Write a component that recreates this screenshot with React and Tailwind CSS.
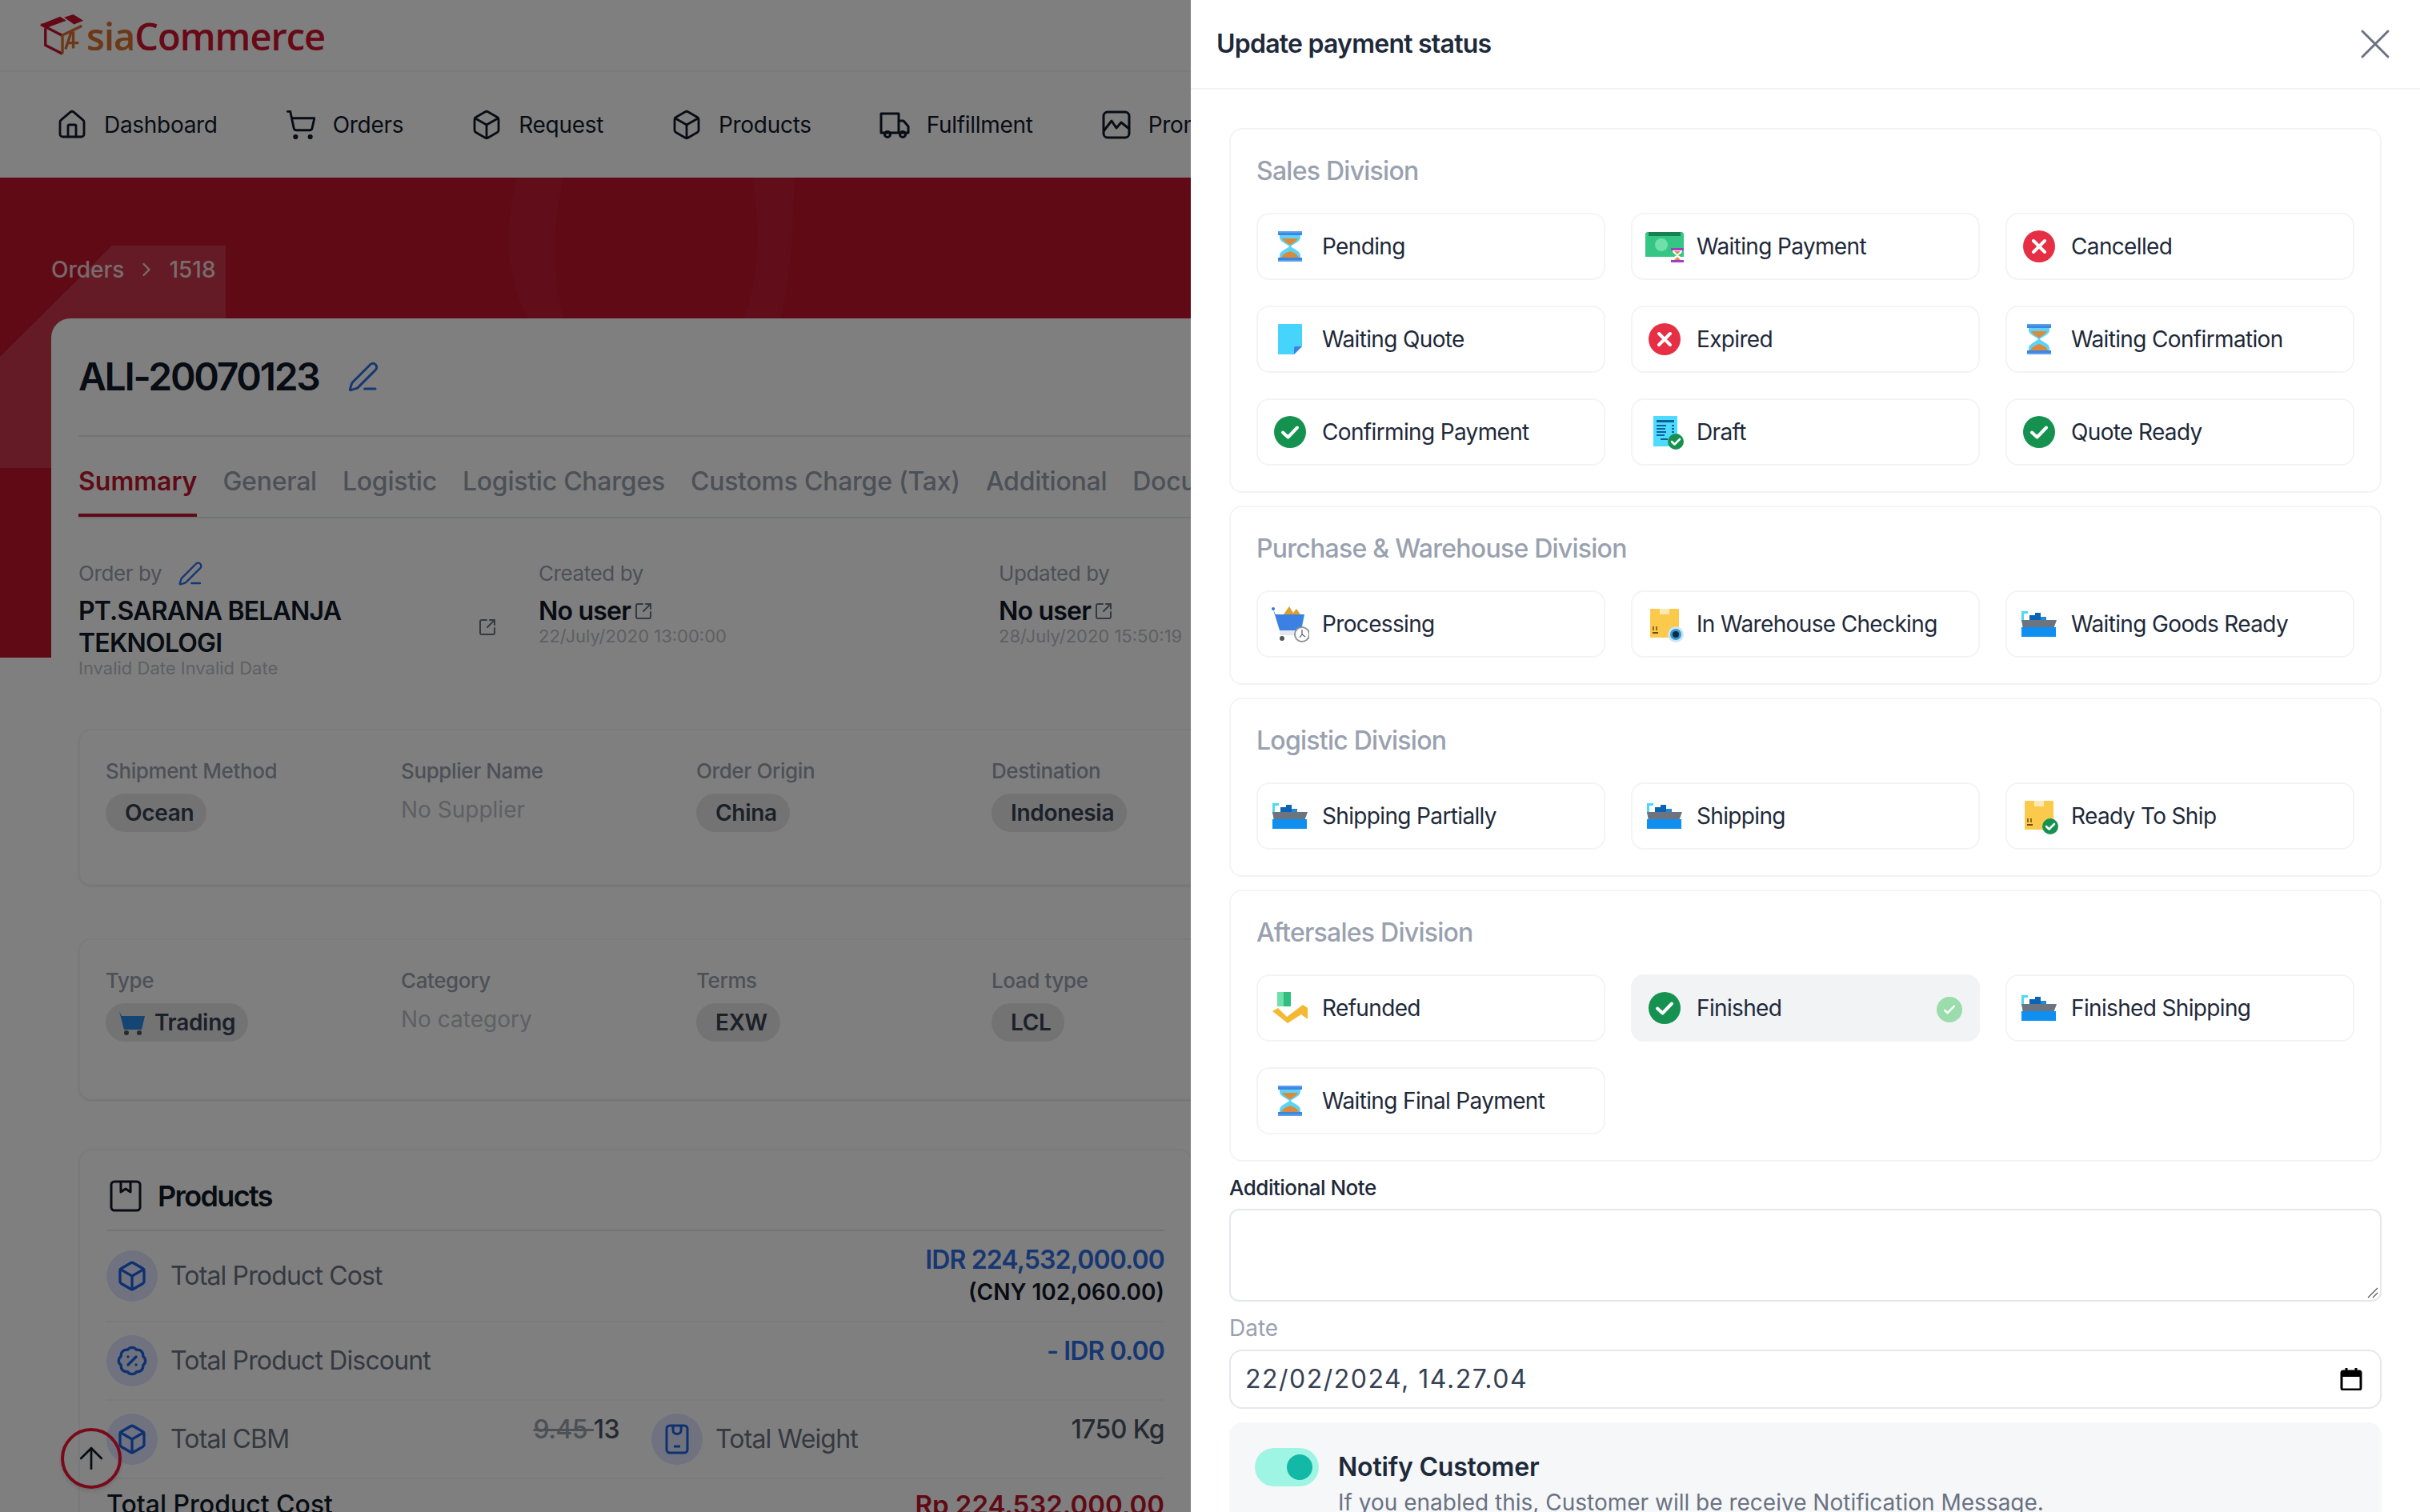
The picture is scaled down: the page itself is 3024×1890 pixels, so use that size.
import React from 'react';
import { House, ShoppingCart, Box, X, PenLine, SquareArrowOutUpRight, ChevronRight, BadgePercent, ArrowUp } from 'lucide-react';

// status icons, drawn on a 48x48 box so they all line up in the buttons
const Hourglass = ({ bar = '#3d87e2', glass = '#5dd3fb', sand = '#d98b3a' }) => (
  <g>
    <rect x="9" y="5" width="30" height="2" fill="#5aa0ee" />
    <rect x="9" y="7" width="30" height="3" fill={bar} />
    <path d="M11 10H37V13C37 18 28 21 25 24C28 27 37 30 37 35V38H11V35C11 30 20 27 23 24C20 21 11 18 11 13Z" fill={glass} />
    <path d="M14 14H34C32 18 27 20 24 22.500C21 20 16 18 14 14Z" fill={sand} />
    <path d="M24 30C27 31 33 33 35 38H13C15 33 21 31 24 30Z" fill={sand} />
    <rect x="9" y="38" width="30" height="3" fill={bar} />
    <rect x="9" y="41" width="30" height="2" fill="#5aa0ee" />
  </g>
);

const Badge = ({ cx = 39, cy = 38, r = 10 }) => (
  <g>
    <circle cx={cx} cy={cy} r={r} fill="#16924f" />
    <path d={`M${cx - 5} ${cy}l3.500 3.500l6.500 -6.500`} fill="none" stroke="#fff" strokeWidth="2.500" strokeLinecap="round" strokeLinejoin="round" />
  </g>
);

const ShipArt = () => (
  <g>
    <rect x="2" y="9" width="3" height="13" fill="#4fd8f2" />
    <rect x="2" y="8" width="8" height="3" fill="#4fd8f2" />
    <rect x="12" y="13" width="7" height="6" fill="#0b63b5" />
    <rect x="19" y="10" width="7" height="9" fill="#0b63b5" />
    <rect x="26" y="15" width="7" height="4" fill="#2188d8" />
    <path d="M2 19H46L42 30H4Z" fill="#6c7480" />
    <path d="M2 28H45V40H2Z" fill="#0f8ff0" />
  </g>
);

const BoxArt = () => (
  <g>
    <rect x="6" y="5" width="36" height="36" rx="1" fill="#fbca4c" />
    <rect x="18" y="5" width="12" height="7" fill="#fdeab2" />
    <path d="M10 32v-5M14 32v-5" stroke="#6b4a10" strokeWidth="1.500" />
    <rect x="9" y="34" width="7" height="2" fill="#6b4a10" />
  </g>
);

const icons = {
  hourglass: <Hourglass />,
  cross: (
    <g>
      <circle cx="24" cy="24" r="20" fill="#e62f45" />
      <path d="M17 17L31 31M31 17L17 31" stroke="#fff" strokeWidth="4" strokeLinecap="round" />
    </g>
  ),
  check: (
    <g>
      <circle cx="24" cy="24" r="20" fill="#15924f" />
      <path d="M15 24.500L21.500 30.500L33 18.500" fill="none" stroke="#fff" strokeWidth="4" strokeLinecap="round" strokeLinejoin="round" />
    </g>
  ),
  cash: (
    <g>
      <path d="M0 8L2 6H46L48 8V37H0Z" fill="#35c584" />
      <rect x="4" y="6" width="40" height="5" fill="#17824f" />
      <circle cx="20" cy="22" r="8" fill="#6fe0a9" />
      <rect x="32" y="26" width="16" height="3" fill="#a13dc9" />
      <path d="M34 29H46C46 33 42 34 41 35C42 36 46 37 46 41H34C34 37 38 36 39 35C38 34 34 33 34 29Z" fill="#fff" />
      <path d="M36 30H44L40 34Z" fill="#e0913a" />
      <path d="M40 37L44 41H36Z" fill="#e0913a" />
      <rect x="32" y="41" width="16" height="3" fill="#a13dc9" />
    </g>
  ),
  doc: (
    <g>
      <path d="M10 5H38Q39 5 39 6V33L29 43H10Q9 43 9 42V6Q9 5 10 5Z" fill="#46d4fd" />
      <path d="M39 33L29 43V35Q29 33 31 33Z" fill="#3c80e0" />
    </g>
  ),
  draft: (
    <g>
      <rect x="10" y="4" width="30" height="38" fill="#4ddcff" />
      <rect x="14" y="9" width="22" height="3" fill="#0e5f9e" />
      <path d="M14 16H26M14 20H25M14 24H26M14 28H24M19 33H28" stroke="#0e5f9e" strokeWidth="2" />
      <path d="M33 16H36M33 20H36M33 24H36" stroke="#0e5f9e" strokeWidth="2" />
      <Badge cx="38" cy="36" r="10" />
    </g>
  ),
  cart: (
    <g>
      <path d="M16 12L23 2L28 10L32 5L37 12Z" fill="#dca02c" />
      <circle cx="3" cy="5" r="2" fill="#2f78d8" />
      <path d="M3 6L6 12H42L38 32H11Z" fill="#3b80e2" />
      <rect x="11" y="32" width="24" height="6" fill="#e5e9ef" />
      <circle cx="14" cy="42" r="3" fill="#555" />
      <circle cx="39" cy="37" r="10" fill="#8d939b" />
      <circle cx="39" cy="37" r="8" fill="#fff" />
      <path d="M39 31V37L43 40M39 37L36 41" stroke="#555" strokeWidth="1.200" fill="none" />
    </g>
  ),
  watch: (
    <g>
      <BoxArt />
      <circle cx="38" cy="37" r="10" fill="#cfe4f2" />
      <circle cx="38" cy="37" r="7" fill="#2f9ad6" />
      <circle cx="38" cy="37" r="4" fill="#12293f" />
    </g>
  ),
  boxok: (
    <g>
      <BoxArt />
      <Badge cx="38" cy="37" r="10" />
    </g>
  ),
  ship: <ShipArt />,
  refund: (
    <g>
      <rect x="8" y="4" width="17" height="18" fill="#2fbe7e" />
      <rect x="8" y="4" width="8" height="18" fill="#6fe0a9" />
      <path d="M2 28L9 24L20 35L40 20L46 24V38L38 32L21 43Z" fill="#f4b832" />
    </g>
  ),
};

const divisions = [
  {
    name: 'Sales Division',
    items: [
      ['Pending', 'hourglass'],
      ['Waiting Payment', 'cash'],
      ['Cancelled', 'cross'],
      ['Waiting Quote', 'doc'],
      ['Expired', 'cross'],
      ['Waiting Confirmation', 'hourglass'],
      ['Confirming Payment', 'check'],
      ['Draft', 'draft'],
      ['Quote Ready', 'check'],
    ],
  },
  {
    name: 'Purchase & Warehouse Division',
    items: [
      ['Processing', 'cart'],
      ['In Warehouse Checking', 'watch'],
      ['Waiting Goods Ready', 'ship'],
    ],
  },
  {
    name: 'Logistic Division',
    items: [
      ['Shipping Partially', 'ship'],
      ['Shipping', 'ship'],
      ['Ready To Ship', 'boxok'],
    ],
  },
  {
    name: 'Aftersales Division',
    items: [
      ['Refunded', 'refund'],
      ['Finished', 'check', true],
      ['Finished Shipping', 'ship'],
      ['Waiting Final Payment', 'hourglass'],
    ],
  },
];

const StatusButton = ({ label, icon, selected }) => (
  <div className={`relative flex h-[84px] items-center gap-4 rounded-[16px] border-2 px-4 ${selected ? 'border-[#f1f3f5] bg-[#f1f3f5]' : 'border-gray-100 bg-white'}`}>
    <svg viewBox="0 0 48 48" className="h-12 w-12 shrink-0">{icons[icon]}</svg>
    <span className="text-[28px] leading-10 tracking-[-0.65px] text-gray-800">{label}</span>
    {selected && (
      <span className="absolute right-[20px] top-[26px] flex h-8 w-8 items-center justify-center rounded-full bg-[#9adcab]">
        <svg viewBox="0 0 24 24" className="h-5 w-5" fill="none" stroke="#fff" strokeWidth="3" strokeLinecap="round" strokeLinejoin="round">
          <path d="M5 13l4 4L19 7" />
        </svg>
      </span>
    )}
  </div>
);

const PaymentPanel = () => (
  <div className="absolute right-0 top-0 flex h-full w-[1536px] flex-col bg-white">
    <div className="flex h-[112px] shrink-0 items-center justify-between border-b-2 border-gray-100 px-8">
      <h2 className="text-[32px] font-semibold tracking-[-0.76px] text-gray-800">Update payment status</h2>
      <X className="mr-[-8px] h-16 w-16 text-gray-500" strokeWidth={1.100} />
    </div>
    <div className="px-[48px] pt-[48px]">
      <div className="flex flex-col gap-4">
        {divisions.map((d) => (
          <div key={d.name} className="rounded-[16px] border-2 border-gray-100 p-8 pt-[32px]">
            <h3 className="mb-8 text-[32px] font-medium leading-10 tracking-[-0.75px] text-gray-400">{d.name}</h3>
            <div className="grid grid-cols-3 gap-8">
              {d.items.map(([label, icon, selected]) => (
                <StatusButton key={label} label={label} icon={icon} selected={selected} />
              ))}
            </div>
          </div>
        ))}
      </div>
      <label className="mt-[13px] block text-[26px] font-medium leading-10 tracking-[-0.5px] text-gray-800">Additional Note</label>
      <div className="relative mt-[6px] h-[116px] rounded-[12px] border-2 border-gray-200">
        <svg viewBox="0 0 16 16" className="absolute bottom-[2px] right-[2px] h-4 w-4" stroke="#555" strokeWidth="1.200">
          <path d="M15 3L3 15M15 9L9 15" />
        </svg>
      </div>
      <label className="mt-[13px] block text-[28px] leading-10 text-gray-400">Date</label>
      <div className="mt-[7px] flex h-[74px] items-center justify-between rounded-[16px] border-2 border-gray-200 pl-[18px] pr-[22px]">
        <span className="text-[32px] tracking-[1.5px] text-gray-700">22/02/2024, 14.27.04</span>
        <svg viewBox="0 0 28 28" className="h-7 w-7" fill="none">
          <rect x="2" y="4" width="24" height="23" rx="2" stroke="#000" strokeWidth="3" />
          <rect x="2" y="4" width="24" height="7" fill="#000" />
          <path d="M8 0V5M20 0V5" stroke="#000" strokeWidth="3" />
        </svg>
      </div>
      <div className="mt-[17px] flex gap-6 rounded-[16px] bg-[#f6f7f9] p-8 pb-10">
        <div className="flex h-12 w-20 shrink-0 items-center justify-end rounded-full bg-[#9ff5e4] pr-2">
          <span className="h-8 w-8 rounded-full bg-[#14b8a6]" />
        </div>
        <div className="mt-1">
          <p className="text-[32px] font-semibold leading-10 tracking-[-0.2px] text-gray-800">Notify Customer</p>
          <p className="mt-1 text-[28px] leading-10 text-gray-500">If you enabled this, Customer will be receive Notification Message.</p>
        </div>
      </div>
    </div>
  </div>
);

const TruckIcon = ({ className }) => (
  <svg viewBox="0 0 40 40" className={className} fill="none" stroke="currentColor" strokeWidth="3" strokeLinejoin="round">
    <path d="M3 30V6H25V30H3Z" />
    <path d="M25 15H31L37 22V30H25" />
    <circle cx="11" cy="32" r="3.500" />
    <circle cx="30" cy="32" r="3.500" />
  </svg>
);

const navItems = [
  ['Dashboard', House],
  ['Orders', ShoppingCart],
  ['Request', Box],
  ['Products', Box],
  ['Fulfillment', TruckIcon],
];

const tabs = ['General', 'Logistic', 'Logistic Charges', 'Customs Charge (Tax)', 'Additional', 'Documents'];

const Pill = ({ children }) => (
  <span className="mt-2 inline-flex h-12 items-center rounded-full bg-[#e6e6e6] pl-6 pr-4 text-[28px] font-semibold tracking-[-0.3px] text-gray-700">{children}</span>
);

const InfoColumn = ({ label, children, none }) => (
  <div className="w-[369px] shrink-0">
    <p className="text-[26px] font-medium leading-10 tracking-[-0.4px] text-gray-400">{label}</p>
    {none ? <p className="mt-[8px] text-[28px] leading-10 text-[#bcc0c7]">{none}</p> : children}
  </div>
);

const RoundIcon = ({ children }) => (
  <span className="flex h-16 w-16 shrink-0 items-center justify-center rounded-full bg-[#e0e6ff] text-[#1d62e0]">{children}</span>
);

const OrderPage = () => (
  <div className="relative">
    {/* red banner sits behind the breadcrumb and card */}
    <div className="absolute left-0 top-[222px] h-[600px] w-full overflow-hidden bg-[#c0142c]">
      <svg viewBox="0 0 3024 600" className="h-full w-full">
        <polygon points="0,224 140,85 282,85 282,363 0,363" fill="#fff" fillOpacity="0.15" />
        <path d="M646 0C630 60 630 120 660 176H704C690 120 690 60 704 0ZM940 0C950 60 950 120 930 176H975C990 120 990 60 993 0Z" fill="#fff" fillOpacity="0.04" />
      </svg>
    </div>

    <div className="relative">
      <div className="flex h-[90px] items-center border-b-2 border-gray-100 bg-white pl-[50px]">
        <svg viewBox="0 0 60 54" className="h-[54px] w-[58px] shrink-0">
          <path d="M1 13L26 3L34 8L10 17ZM31 4L43 0L56 8L44 13Z" fill="#c8102e" />
          <path d="M1 13L30 28" stroke="#c8102e" strokeWidth="3.500" />
          <path d="M7 18V40L29 51" fill="none" stroke="#c8102e" strokeWidth="3.500" />
          <path d="M29 51V27L54 15M33 45L40 24H43V44M36 37H50" fill="none" stroke="#d8702c" strokeWidth="3.500" />
        </svg>
        <span className="mt-[2px] font-['Open_Sans',sans-serif] text-[47px] font-semibold leading-none tracking-[-1px]">
          <span className="text-[#d8702c]">sia</span>
          <span className="text-[#d0122e]">Commerce</span>
        </span>
      </div>
      <nav className="flex h-[132px] items-center gap-[84px] bg-white pl-[70px]">
        {navItems.map(([name, Icon]) => (
          <div key={name} className="flex items-center gap-[20px]">
            <Icon className="h-10 w-10 text-gray-900" strokeWidth={1.700} />
            <span className="text-[28px] tracking-[-0.3px] text-gray-900">{name}</span>
          </div>
        ))}
        <div className="flex items-center gap-[20px]">
          <svg viewBox="0 0 40 40" className="h-10 w-10 text-gray-900" fill="none" stroke="currentColor" strokeWidth="3" strokeLinejoin="round">
            <rect x="4" y="4" width="32" height="32" rx="5" />
            <path d="M4 28L14 15L20 24L26 17L36 25" />
          </svg>
          <span className="text-[28px] tracking-[-0.3px] text-gray-900">Promotion</span>
        </div>
      </nav>

      <div className="flex h-[176px] items-end pb-[41px] pl-[64px]">
        <div className="flex items-center gap-[14px] text-[28px] font-medium leading-10 text-white/80">
          <span>Orders</span>
          <ChevronRight className="h-7 w-7" strokeWidth={2} />
          <span>1518</span>
        </div>
      </div>

      <div className="ml-[64px] w-[2400px] rounded-tl-[24px] bg-white pl-[34px]">
        <div className="flex h-[148px] items-center gap-[36px] border-b-2 border-gray-200">
          <h1 className="text-[48px] font-semibold tracking-[-2.3px] text-gray-900">ALI-20070123</h1>
          <PenLine className="h-10 w-10 text-[#2f6fe4]" strokeWidth={1.800} />
        </div>
        <div className="flex h-[102px] gap-8 border-b-2 border-gray-200">
          <span className="h-[100px] border-b-4 border-[#c0142c] pt-8 text-[32px] font-semibold leading-[48px] text-[#c0142c]">Summary</span>
          {tabs.map((t) => (
            <span key={t} className="pt-8 text-[32px] font-medium leading-[48px] tracking-[-0.25px] text-gray-400">{t}</span>
          ))}
        </div>

        <div className="mt-[49px] flex">
          <div className="w-[575px] shrink-0">
            <div className="flex items-center gap-[20px]">
              <span className="text-[26px] leading-10 tracking-[-0.4px] text-gray-400">Order by</span>
              <PenLine className="h-8 w-8 text-[#2f6fe4]" strokeWidth={1.800} />
            </div>
            <div className="mt-[7px] flex w-[523px] items-center justify-between">
              <p className="w-[400px] text-[32px] font-semibold leading-10 tracking-[-0.8px] text-gray-900">PT.SARANA BELANJA TEKNOLOGI</p>
              <SquareArrowOutUpRight className="h-6 w-6 text-gray-500" strokeWidth={2} />
            </div>
            <p className="text-[22px] leading-[22px] text-[#bcc0c7]">Invalid Date Invalid Date</p>
          </div>
          {[['Created by', '22/July/2020 13:00:00'], ['Updated by', '28/July/2020 15:50:19']].map(([label, date]) => (
            <div key={label} className="w-[575px] shrink-0">
              <span className="text-[26px] leading-10 tracking-[-0.4px] text-gray-400">{label}</span>
              <div className="mt-[7px] flex items-center gap-[4px]">
                <span className="text-[32px] font-semibold leading-10 tracking-[-0.8px] text-gray-900">No user</span>
                <SquareArrowOutUpRight className="h-6 w-6 text-gray-500" strokeWidth={2} />
              </div>
              <p className="text-[22px] leading-[22px] text-[#bcc0c7]">{date}</p>
            </div>
          ))}
        </div>

        <div className="mt-[65px] flex h-[196px] rounded-[16px] border-2 border-gray-100 pl-[32px] pt-[31px] shadow-sm">
          <InfoColumn label="Shipment Method"><Pill>Ocean</Pill></InfoColumn>
          <InfoColumn label="Supplier Name" none="No Supplier" />
          <InfoColumn label="Order Origin"><Pill>China</Pill></InfoColumn>
          <InfoColumn label="Destination"><Pill>Indonesia</Pill></InfoColumn>
        </div>

        <div className="mt-[66px] flex h-[202px] rounded-[16px] border-2 border-gray-100 pl-[32px] pt-[31px] shadow-sm">
          <InfoColumn label="Type">
            <Pill>
              <svg viewBox="0 0 36 32" className="ml-[-9px] mr-[10px] h-8 w-9">
                <path d="M2 2L5 8H34L30 25H8Z" fill="#2b8be6" />
                <circle cx="11" cy="29" r="3" fill="#555" />
                <circle cx="27" cy="29" r="3" fill="#555" />
              </svg>
              Trading
            </Pill>
          </InfoColumn>
          <InfoColumn label="Category" none="No category" />
          <InfoColumn label="Terms"><Pill>EXW</Pill></InfoColumn>
          <InfoColumn label="Load type"><Pill>LCL</Pill></InfoColumn>
        </div>

        <div className="mt-[61px] h-[600px] w-[1392px] rounded-[16px] border-2 border-gray-100 px-[33px]">
          <div className="flex h-[101px] items-center gap-[20px] border-b-2 border-gray-200 pl-1 pt-[14px]">
            <svg viewBox="0 0 40 40" className="h-10 w-10 text-gray-900" fill="none" stroke="currentColor" strokeWidth="3" strokeLinejoin="round">
              <rect x="2" y="2" width="36" height="36" rx="4" />
              <path d="M14 2V15L20 11L26 15V2" />
            </svg>
            <span className="text-[36px] font-semibold tracking-[-1.7px] text-gray-900">Products</span>
          </div>
          <div className="flex h-[114px] items-center justify-between border-b-2 border-gray-100">
            <div className="flex items-center gap-[16px]">
              <RoundIcon><Box className="h-10 w-10" /></RoundIcon>
              <span className="text-[32px] tracking-[-0.85px] text-gray-500">Total Product Cost</span>
            </div>
            <div className="text-right">
              <p className="text-[32px] font-semibold leading-10 tracking-[-0.85px] text-[#2f6fe4]">IDR 224,532,000.00</p>
              <p className="text-[28px] font-semibold leading-10 text-gray-900">(CNY 102,060.00)</p>
            </div>
          </div>
          <div className="flex h-[98px] items-start justify-between border-b-2 border-gray-100 pt-4">
            <div className="flex items-center gap-[16px]">
              <RoundIcon><BadgePercent className="h-10 w-10" /></RoundIcon>
              <span className="text-[32px] tracking-[-0.85px] text-gray-500">Total Product Discount</span>
            </div>
            <p className="text-[32px] font-semibold leading-10 tracking-[-0.85px] text-[#2f6fe4]">- IDR 0.00</p>
          </div>
          <div className="grid h-[98px] grid-cols-2 gap-10 border-b-2 border-gray-100 pt-4">
            <div className="flex items-start justify-between">
              <div className="flex items-center gap-[16px]">
                <RoundIcon><Box className="h-10 w-10" /></RoundIcon>
                <span className="text-[32px] tracking-[-0.85px] text-gray-500">Total CBM</span>
              </div>
              <p className="text-[32px] font-medium leading-10 tracking-[-0.6px] text-gray-600"><span className="text-gray-400 line-through">9.45 </span>13</p>
            </div>
            <div className="flex items-start justify-between">
              <div className="flex items-center gap-[16px]">
                <RoundIcon>
                  <svg viewBox="0 0 40 40" className="h-10 w-10" fill="none" stroke="currentColor" strokeWidth="3" strokeLinejoin="round">
                    <rect x="7" y="3" width="26" height="34" rx="4" />
                    <path d="M15 4V9C15 15 25 15 25 9V4M16 29H24" />
                  </svg>
                </RoundIcon>
                <span className="text-[32px] tracking-[-0.85px] text-gray-500">Total Weight</span>
              </div>
              <p className="text-[32px] font-medium leading-10 tracking-[-0.6px] text-gray-600">1750 Kg</p>
            </div>
          </div>
          <div className="flex items-center justify-between pt-[12px]">
            <span className="text-[32px] font-medium leading-10 text-gray-900">Total Product Cost</span>
            <span className="text-[33px] font-semibold leading-10 text-[#c0142c]">Rp 224.532.000,00</span>
          </div>
        </div>
      </div>
    </div>
  </div>
);

export default function App() {
  return (
    <div className="relative h-[1890px] w-full overflow-hidden bg-white font-['Inter',sans-serif]">
      <OrderPage />
      <div className="absolute left-[76px] top-[1785px] flex h-[76px] w-[76px] items-center justify-center rounded-full border-4 border-[#f01438] shadow-md">
        <ArrowUp className="h-11 w-11 text-gray-900" strokeWidth={1.500} />
      </div>
      <div className="absolute inset-0 bg-black/50" />
      <PaymentPanel />
    </div>
  );
}
